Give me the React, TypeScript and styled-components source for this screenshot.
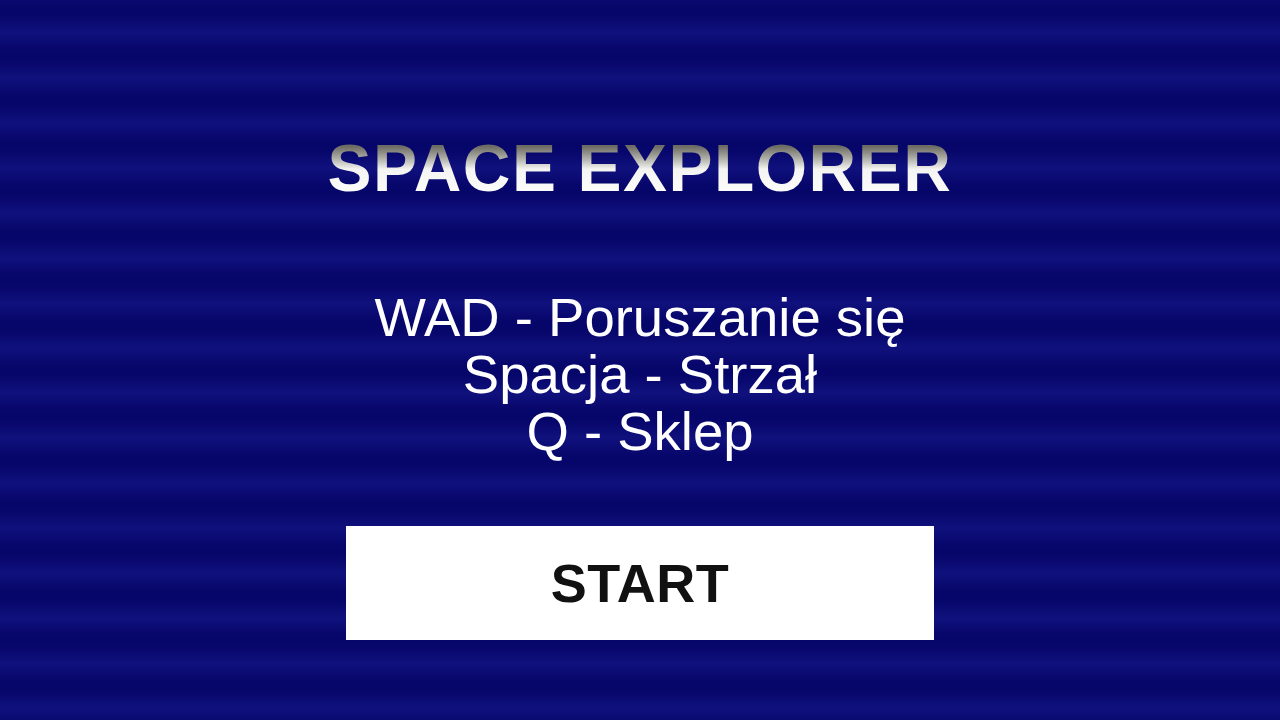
import styled, { createGlobalStyle } from 'styled-components';

/**
 * Page-wide reset and the striped night background
 */
const GlobalStyle = createGlobalStyle`
  html, body {
    margin: 0;
    padding: 0;
    height: 100%;
  }

  body {
    font-family: "Liberation Sans", Arial, sans-serif;
    background-color: #08086d;
    background-image: repeating-linear-gradient(
      180deg,
      #05056a 0px,
      #06066b 5px,
      #11117e 22px,
      #06066b 39px,
      #05056a 45px
    );
    background-position: 0 11px;
  }
`;

const controls = [
  'WAD - Poruszanie się',
  'Spacja - Strzał',
  'Q - Sklep',
];

/**
 * Start menu screen
 */
const App: React.FC = () => {
  return (
    <>
      <GlobalStyle />
      <Screen>
        <Title>SPACE EXPLORER</Title>
        <Controls>
          { controls.map(line => <ControlLine key={ line }>{ line }</ControlLine>) }
        </Controls>
        <StartButton type='button'>START</StartButton>
      </Screen>
    </>
  );
};

/**
 * Full height column that centres the menu
 */
const Screen = styled.main`
  min-height: 100vh;
  box-sizing: border-box;
  padding-top: 135px;
  display: flex;
  flex-direction: column;
  align-items: center;
`;

/**
 * Metallic game title
 */
const Title = styled.h1`
  margin: 0;
  font-size: 66px;
  line-height: 66px;
  font-weight: 700;
  letter-spacing: 1.5px;
  background: linear-gradient(180deg, #5e5e58 0%, #6e6e66 18%, #a9a9a2 34%, #f4f4f2 52%, #ffffff 100%);
  -webkit-background-clip: text;
  background-clip: text;
  color: transparent;
`;

/**
 * Keyboard help list
 */
const Controls = styled.div`
  margin-top: 88px;
  display: flex;
  flex-direction: column;
  align-items: center;
`;

const ControlLine = styled.p`
  margin: 0;
  font-size: 54.5px;
  line-height: 57px;
  color: #ffffff;
`;

/**
 * Big white start button
 */
const StartButton = styled.button`
  margin-top: 66px;
  width: 588px;
  height: 114px;
  border: none;
  background: #ffffff;
  display: flex;
  align-items: center;
  justify-content: center;
  font-family: "Liberation Sans", Arial, sans-serif;
  font-size: 54px;
  font-weight: 700;
  letter-spacing: 0.5px;
  color: #111111;
  cursor: pointer;
`;

export default App;
